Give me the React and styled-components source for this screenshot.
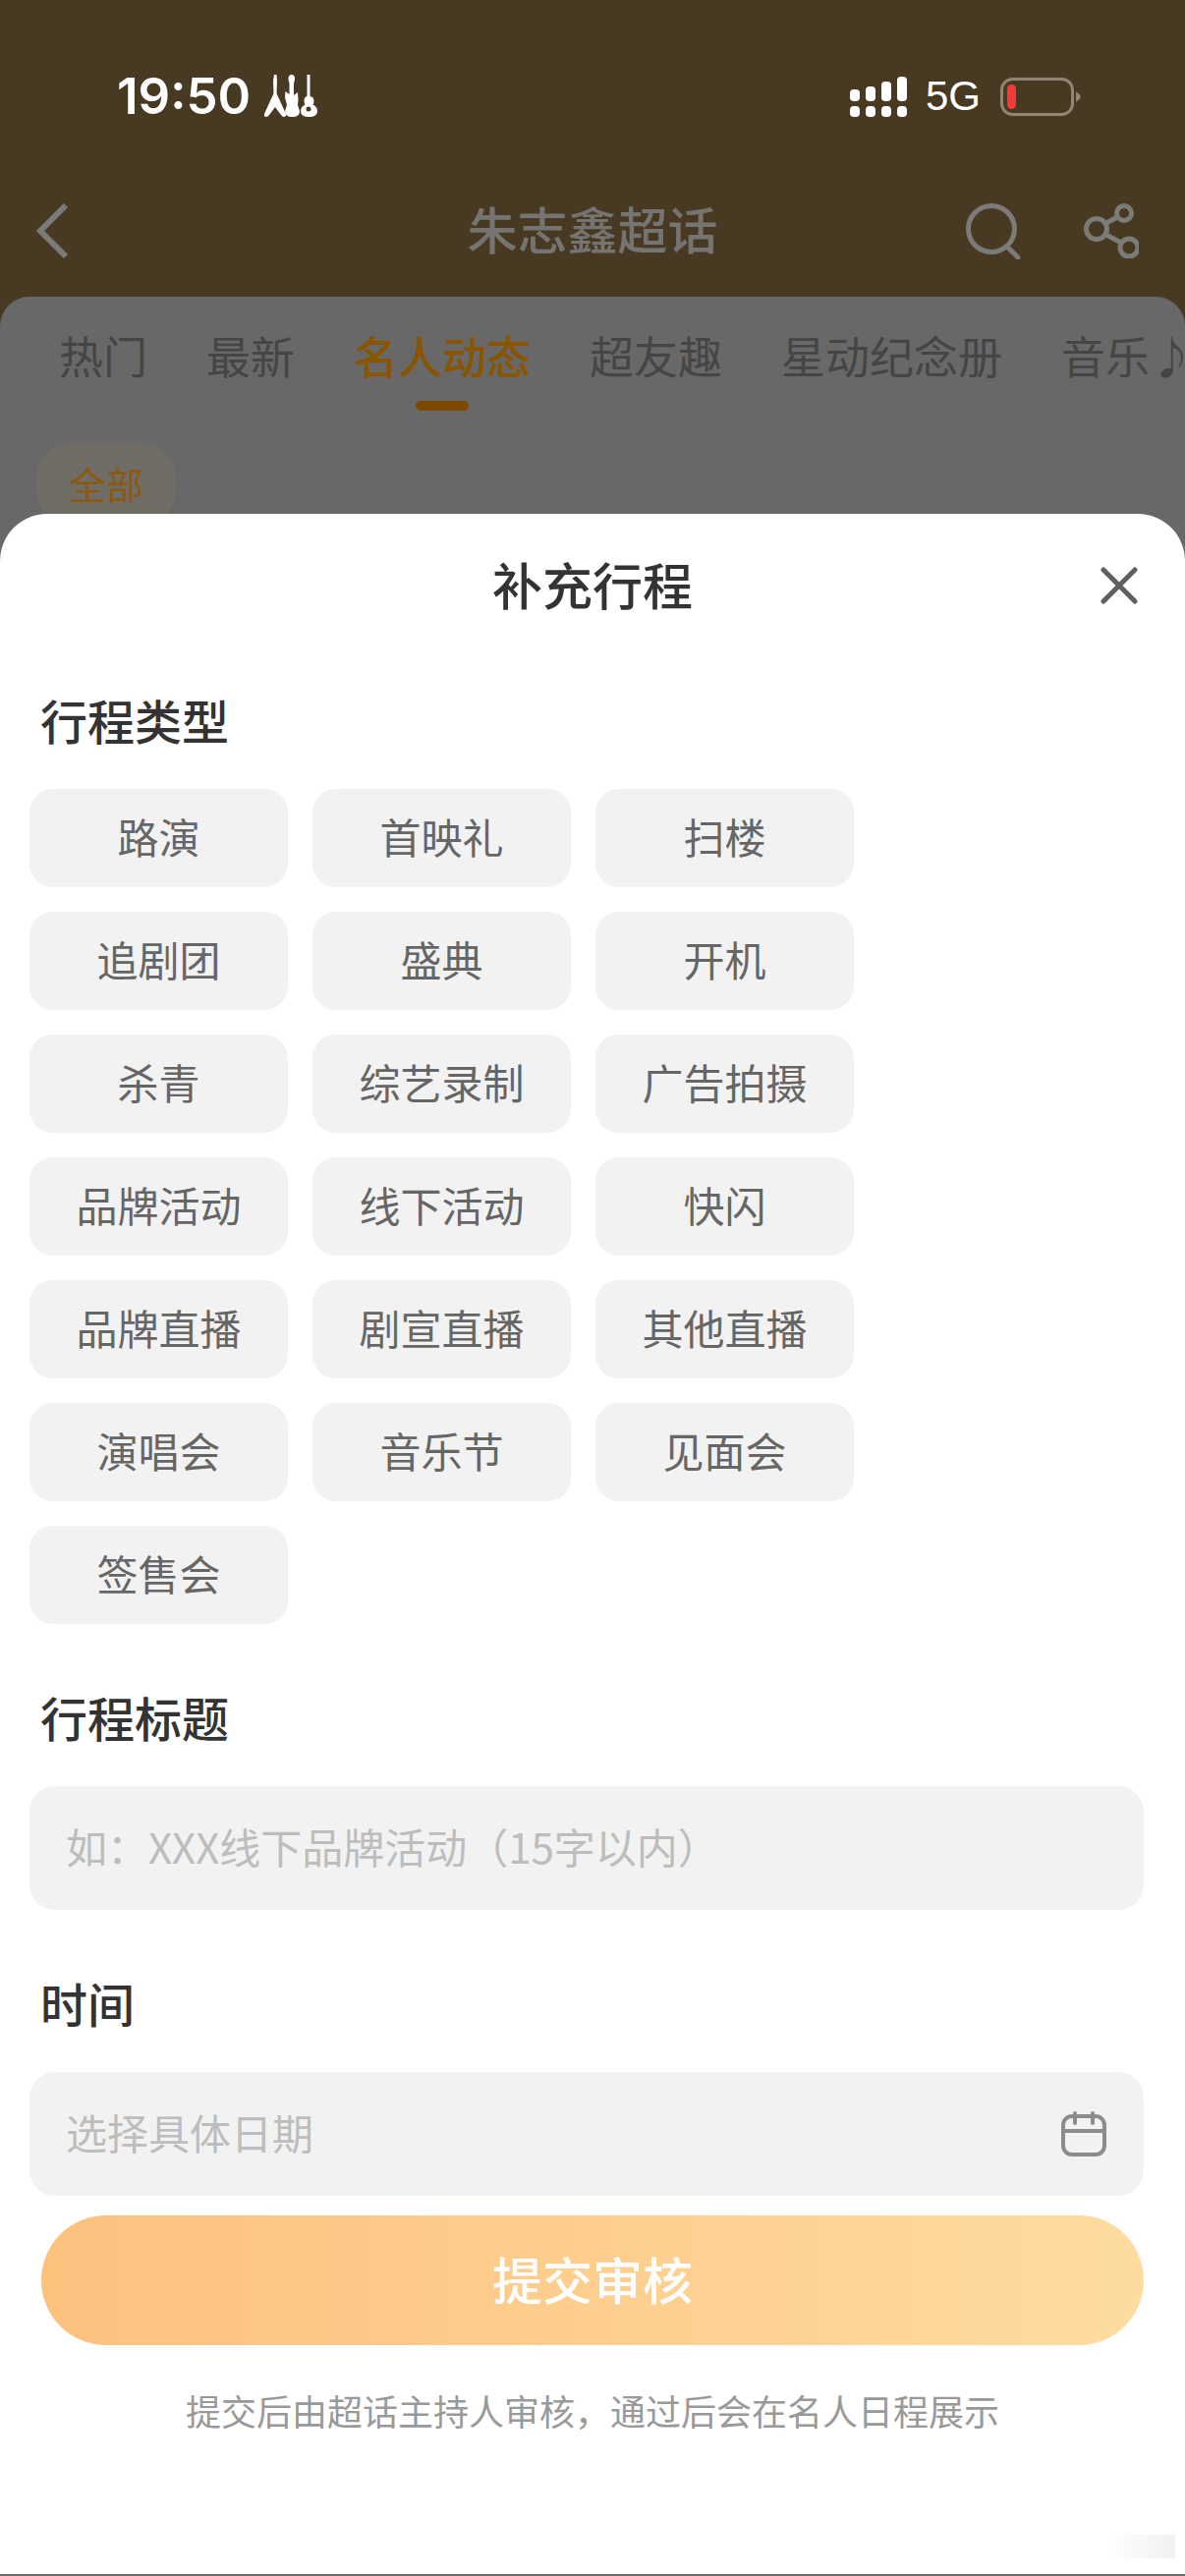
import React from "react";
import styled, { createGlobalStyle } from "styled-components";

const CJK = `"Noto Sans CJK SC", "Noto Sans", sans-serif`;

const GlobalStyle = createGlobalStyle`
  html, body {
    margin: 0;
    padding: 0;
    background: #483923;
  }
  * {
    box-sizing: border-box;
  }
`;

const Screen = styled.div`
  position: relative;
  display: flex;
  flex-direction: column;
  width: 1206px;
  height: 2622px;
  overflow: hidden;
  background: #483923;
  font-family: ${CJK};
`;

const StatusBar = styled.div`
  display: flex;
  justify-content: space-between;
  align-items: center;
  height: 56px;
  margin-top: 70px;
  padding: 0 106px 0 119px;
  color: #ffffff;
`;

const StatusGroup = styled.div`
  display: flex;
  align-items: center;
`;

const Time = styled.span`
  font-family: Inter, sans-serif;
  font-size: 51px;
  font-weight: 600;
  line-height: 56px;
  margin-right: 14px;
`;

const Network = styled.span`
  font-family: "Liberation Sans", sans-serif;
  font-size: 42px;
  line-height: 56px;
  margin: 0 18px 0 19px;
`;

const NavBar = styled.div`
  display: grid;
  grid-template-columns: 1fr auto 1fr;
  align-items: center;
  height: 80px;
  margin-top: 69px;
  padding: 0 47px;
`;

const BackButton = styled.div`
  display: flex;
  margin-left: -11px;
`;

const NavTitle = styled.div`
  margin-bottom: 6px;
  font-size: 51px;
  font-weight: 500;
  line-height: 60px;
  color: #767470;
`;

const NavActions = styled.div`
  display: flex;
  justify-content: flex-end;
  align-items: center;
  gap: 64px;
`;

const Sheet = styled.div`
  flex: 1;
  margin-top: 27px;
  border-radius: 30px 30px 0 0;
  background: #686868;
`;

const Tabs = styled.div`
  display: flex;
  align-items: flex-start;
  gap: 60px;
  padding: 30px 0 0 60px;
  overflow: hidden;
  white-space: nowrap;
`;

const Tab = styled.div`
  display: flex;
  flex-direction: column;
  align-items: center;
  flex: none;
  font-size: 45px;
  font-weight: ${(p) => (p.$active ? 500 : 400)};
  line-height: 60px;
  color: ${(p) => (p.$active ? "#8a5500" : "#454545")};
`;

const TabMark = styled.div`
  width: 54px;
  height: 10px;
  margin-top: 16px;
  border-radius: 5px;
  background: #7b4a00;
`;

const FilterPill = styled.div`
  display: inline-flex;
  justify-content: center;
  align-items: center;
  width: 142px;
  height: 84px;
  margin: 33px 0 0 37px;
  padding-bottom: 4px;
  border-radius: 36px;
  background: #706c66;
  font-size: 38px;
  color: #8a5a10;
`;

const Modal = styled.div`
  position: absolute;
  top: 523px;
  left: 0;
  right: 0;
  bottom: 0;
  display: flex;
  flex-direction: column;
  padding: 41px 42px 0 30px;
  border-radius: 48px 48px 0 0;
  border-bottom: 2px solid #6a6a6a;
  background: #ffffff;
`;

const ModalHeader = styled.div`
  position: relative;
  display: flex;
  justify-content: center;
  margin: 0 -12px 0 0;
`;

const ModalTitle = styled.div`
  font-size: 51px;
  font-weight: 500;
  line-height: 60px;
  color: #333333;
`;

const CloseButton = styled.div`
  position: absolute;
  top: 13px;
  right: 18px;
  display: flex;
`;

const SectionTitle = styled.div`
  margin: ${(p) => p.$top}px 0 41px 11px;
  font-size: 48px;
  font-weight: 500;
  line-height: 60px;
  color: #333333;
`;

const ChipGrid = styled.div`
  display: grid;
  grid-template-columns: repeat(3, 263px);
  grid-auto-rows: 100px;
  gap: 25px;
`;

const Chip = styled.div`
  display: flex;
  justify-content: center;
  align-items: center;
  padding-bottom: 5px;
  border-radius: 24px;
  background: #f2f2f2;
  font-size: 42px;
  color: #666666;
`;

const Field = styled.div`
  display: flex;
  justify-content: space-between;
  align-items: center;
  width: 1134px;
  height: 126px;
  padding: 0 38px 0 37px;
  border-radius: 26px;
  background: #f2f2f2;
  font-size: 42px;
  color: #bdbdbd;
`;

const FieldText = styled.span`
  margin-bottom: 5px;
`;

const SubmitButton = styled.div`
  display: flex;
  justify-content: center;
  align-items: center;
  width: 1122px;
  height: 132px;
  margin: 20px 0 0 12px;
  padding-bottom: 4px;
  border-radius: 66px;
  background: linear-gradient(90deg, #fdc17e 0%, #fedc9f 100%);
  font-size: 51px;
  font-weight: 500;
  color: #ffffff;
`;

const Note = styled.div`
  margin: 36px 0 0 12px;
  width: 1122px;
  font-size: 36px;
  line-height: 60px;
  text-align: center;
  color: #999999;
`;

const Smudge = styled.div`
  position: absolute;
  right: 10px;
  bottom: 16px;
  width: 70px;
  height: 24px;
  background: linear-gradient(90deg, rgba(0, 0, 0, 0), rgba(0, 0, 0, 0.06));
`;

const chips = [
  "路演", "首映礼", "扫楼",
  "追剧团", "盛典", "开机",
  "杀青", "综艺录制", "广告拍摄",
  "品牌活动", "线下活动", "快闪",
  "品牌直播", "剧宣直播", "其他直播",
  "演唱会", "音乐节", "见面会",
  "签售会",
];

const tabs = ["热门", "最新", "名人动态", "超友趣", "星动纪念册", "音乐♪"];

const Guitars = () => (
  <svg width="54" height="44" viewBox="0 0 54 44" fill="#ffffff">
    <path d="M10 0h2.500l.5 6-.5 13L22 40q.5 3-2 3-1.500 0-3-2l-6-8-6 8q-1.500 2-3 2-2.500 0-2-3L9.500 19 9 6z" />
    <path d="M28.500 0q3 1 2.500 5l-1 4v12l4-3 .5 8-.5 5 2 6q0 6-7.500 6t-7.500-6l2-6-2-8 .5-6 4 3V9l-1-4q-.5-4 2.500-5z" />
    <g transform="translate(2 0)">
      <path d="M41.500 0h3v22q4 .5 4 5 0 2.500-1 3.500 4.500 2 4.500 6.500 0 6-8.500 6t-8.500-6q0-4.500 4.500-6.500-1-1-1-3.500 0-4.500 3-5z" />
      <circle cx="43" cy="35" r="2.500" fill="#483923" />
    </g>
  </svg>
);

const Signal = () => (
  <svg width="58" height="41" viewBox="0 0 58 41" fill="#ffffff">
    <rect x="0" y="13" width="10" height="12" rx="4" />
    <rect x="16" y="10" width="10" height="15" rx="4" />
    <rect x="32" y="5" width="10" height="20" rx="4" />
    <rect x="48" y="0" width="10" height="25" rx="4" />
    <rect x="0" y="30" width="10" height="11" rx="4" />
    <rect x="16" y="30" width="10" height="11" rx="4" />
    <rect x="32" y="30" width="10" height="11" rx="4" />
    <rect x="48" y="30" width="10" height="11" rx="4" />
  </svg>
);

const Battery = () => (
  <svg width="84" height="39" viewBox="0 0 84 39">
    <rect x="3.500" y="1.500" width="72" height="36" rx="11" fill="none" stroke="#918676" strokeWidth="3" />
    <rect x="9" y="7" width="9" height="25" rx="4.500" fill="#f33a3a" />
    <path d="M79 14l4 3.500q1 2 0 4L79 25z" fill="#918676" />
  </svg>
);

const BackIcon = () => (
  <svg width="34" height="58" viewBox="0 0 34 58" fill="none" stroke="#7a7a78" strokeWidth="6">
    <path d="M31 3L5 29l26 26" />
  </svg>
);

const SearchIcon = () => (
  <svg width="56" height="57" viewBox="0 0 56 57" fill="none" stroke="#7b7b78" strokeWidth="5" strokeLinecap="round">
    <circle cx="26" cy="26" r="23.500" />
    <path d="M42 44l11 11" />
  </svg>
);

const ShareIcon = () => (
  <svg width="56" height="56" viewBox="0 0 56 56" fill="none" stroke="#7b7b78" strokeWidth="5">
    <circle cx="13" cy="26" r="10.500" />
    <circle cx="41" cy="10" r="7.500" />
    <circle cx="46" cy="45" r="9" />
    <path d="M23 20l11-6M23 32l15 8" />
  </svg>
);

const CloseIcon = () => (
  <svg width="38" height="38" viewBox="0 0 38 38" fill="none" stroke="#5f5f5f" strokeWidth="5" strokeLinecap="round">
    <path d="M3 3l32 32M35 3L3 35" />
  </svg>
);

const CalendarIcon = () => (
  <svg width="46" height="46" viewBox="0 0 46 46" fill="none" stroke="#8c8c8c" strokeWidth="4" strokeLinecap="round">
    <rect x="2" y="5" width="42" height="39" rx="9" />
    <path d="M2 20h42M14 2v10M32 2v10" />
  </svg>
);

const App = () => (
  <Screen>
    <GlobalStyle />
    <StatusBar>
      <StatusGroup>
        <Time>19:50</Time>
        <Guitars />
      </StatusGroup>
      <StatusGroup>
        <Signal />
        <Network>5G</Network>
        <Battery />
      </StatusGroup>
    </StatusBar>
    <NavBar>
      <BackButton>
        <BackIcon />
      </BackButton>
      <NavTitle>朱志鑫超话</NavTitle>
      <NavActions>
        <SearchIcon />
        <ShareIcon />
      </NavActions>
    </NavBar>
    <Sheet>
      <Tabs>
        {tabs.map((tab, i) => (
          <Tab key={tab} $active={i === 2}>
            {tab}
            {i === 2 && <TabMark />}
          </Tab>
        ))}
      </Tabs>
      <FilterPill>全部</FilterPill>
    </Sheet>
    <Modal>
      <ModalHeader>
        <ModalTitle>补充行程</ModalTitle>
        <CloseButton>
          <CloseIcon />
        </CloseButton>
      </ModalHeader>
      <SectionTitle $top={78}>行程类型</SectionTitle>
      <ChipGrid>
        {chips.map((chip) => (
          <Chip key={chip}>{chip}</Chip>
        ))}
      </ChipGrid>
      <SectionTitle $top={64}>行程标题</SectionTitle>
      <Field>
        <FieldText>如：XXX线下品牌活动（15字以内）</FieldText>
      </Field>
      <SectionTitle $top={64}>时间</SectionTitle>
      <Field>
        <FieldText>选择具体日期</FieldText>
        <CalendarIcon />
      </Field>
      <SubmitButton>提交审核</SubmitButton>
      <Note>提交后由超话主持人审核，通过后会在名人日程展示</Note>
      <Smudge />
    </Modal>
  </Screen>
);

export default App;
